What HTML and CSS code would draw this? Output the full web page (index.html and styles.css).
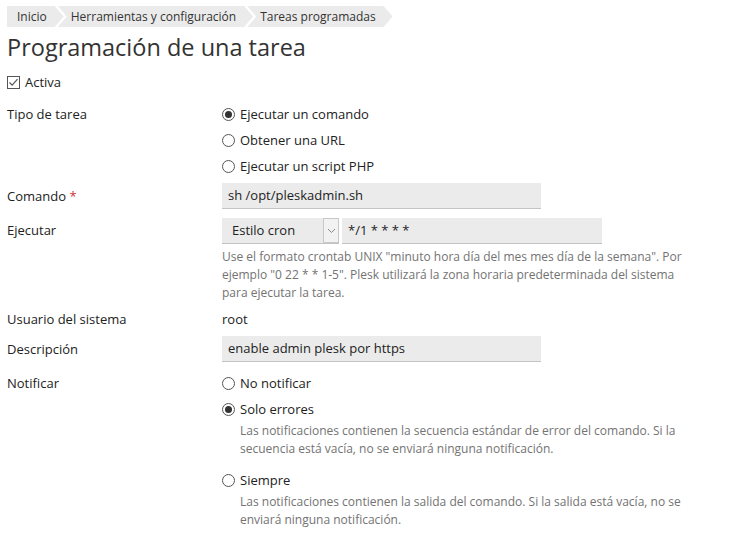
FILE: index.html
```html
<!DOCTYPE html>
<html>
<head>
    <title>Programación de una tarea</title>
    <link rel="stylesheet" href="styles.css">
</head>
<body>
    <div class="breadcrumb">
        <span class="crumb first">Inicio</span>
        <span class="crumb">Herramientas y configuración</span>
        <span class="crumb">Tareas programadas</span>
    </div>

    <h1>Programación de una tarea</h1>

    <div class="check-row">
        <svg class="checkbox" width="13" height="13" viewBox="0 0 13 13">
            <rect x="0.5" y="0.5" width="12" height="12" fill="#fff" stroke="#555"/>
            <path d="M2.5 6.5 L5.2 9.2 L10.5 3.2" fill="none" stroke="#555" stroke-width="1.2"/>
        </svg>
        <span>Activa</span>
    </div>

    <div class="row row-type">
        <div class="label">Tipo de tarea</div>
        <div class="field">
            <div class="radio"><svg width="13" height="13" viewBox="0 0 13 13"><circle cx="6.5" cy="6.5" r="6" fill="#fff" stroke="#555"/><circle cx="6.5" cy="6.5" r="3.5" fill="#333"/></svg>Ejecutar un comando</div>
            <div class="radio"><svg width="13" height="13" viewBox="0 0 13 13"><circle cx="6.5" cy="6.5" r="6" fill="#fff" stroke="#555"/></svg>Obtener una URL</div>
            <div class="radio"><svg width="13" height="13" viewBox="0 0 13 13"><circle cx="6.5" cy="6.5" r="6" fill="#fff" stroke="#555"/></svg>Ejecutar un script PHP</div>
        </div>
    </div>

    <div class="row row-command">
        <div class="label">Comando <span class="required">*</span></div>
        <div class="field"><div class="input wide">sh /opt/pleskadmin.sh</div></div>
    </div>

    <div class="row row-run">
        <div class="label">Ejecutar</div>
        <div class="field">
            <div class="run-inputs">
                <div class="select">
                    <span class="select-text">Estilo cron</span>
                    <span class="select-arrow">
                        <svg width="9" height="6" viewBox="0 0 9 6"><path d="M1 1 L4.5 4.5 L8 1" fill="none" stroke="#888" stroke-width="1"/></svg>
                    </span>
                </div>
                <div class="input cron">*/1 * * * *</div>
            </div>
            <p class="hint">Use el formato crontab UNIX "minuto hora día del mes mes día de la semana". Por<br>ejemplo "0 22 * * 1-5". Plesk utilizará la zona horaria predeterminada del sistema<br>para ejecutar la tarea.</p>
        </div>
    </div>

    <div class="row row-user">
        <div class="label">Usuario del sistema</div>
        <div class="field">root</div>
    </div>

    <div class="row row-desc">
        <div class="label">Descripción</div>
        <div class="field"><div class="input wide">enable admin plesk por https</div></div>
    </div>

    <div class="row row-notify">
        <div class="label">Notificar</div>
        <div class="field">
            <div class="radio"><svg width="13" height="13" viewBox="0 0 13 13"><circle cx="6.5" cy="6.5" r="6" fill="#fff" stroke="#555"/></svg>No notificar</div>
            <div class="radio"><svg width="13" height="13" viewBox="0 0 13 13"><circle cx="6.5" cy="6.5" r="6" fill="#fff" stroke="#555"/><circle cx="6.5" cy="6.5" r="3.5" fill="#333"/></svg>Solo errores</div>
            <p class="hint indent">Las notificaciones contienen la secuencia estándar de error del comando. Si la<br>secuencia está vacía, no se enviará ninguna notificación.</p>
            <div class="radio spaced"><svg width="13" height="13" viewBox="0 0 13 13"><circle cx="6.5" cy="6.5" r="6" fill="#fff" stroke="#555"/></svg>Siempre</div>
            <p class="hint indent">Las notificaciones contienen la salida del comando. Si la salida está vacía, no se<br>enviará ninguna notificación.</p>
        </div>
    </div>
</body>
</html>
```

FILE: styles.css
```css
body { font-family: "Open Sans", "DejaVu Sans", sans-serif; font-size: 13px; color: #222; margin: 0; padding: 0 7px; background: #fff; }

.breadcrumb { display: flex; margin-top: 6px; height: 21px; }
.crumb { display: block; height: 21px; line-height: 21px; font-size: 12px; color: #333; background: #ebebeb; padding: 0 17px 0 13px; margin-left: -6px;
    clip-path: polygon(0 0, calc(100% - 9px) 0, 100% 50%, calc(100% - 9px) 100%, 0 100%, 9px 50%); }
.crumb.first { margin-left: 0; padding-left: 10px;
    clip-path: polygon(0 0, calc(100% - 9px) 0, 100% 50%, calc(100% - 9px) 100%, 0 100%); }

h1 { font-size: 23.5px; font-weight: normal; line-height: 30px; color: #333; margin: 5px 0 10px; }

.check-row { display: flex; align-items: center; height: 20px; }
.checkbox { margin-right: 5px; }

.row { display: flex; }
.label { width: 215px; flex-shrink: 0; line-height: 26px; }
.field { flex: 1; }
.required { color: #d32f2f; }

.row-type { margin-top: 9px; }
.row-command { margin-top: 4px; }
.row-run { margin-top: 9px; }
.row-run .label { line-height: 25px; }
.row-user { margin-top: 4px; }
.row-user .field { line-height: 26px; }
.row-desc { margin-top: 4px; }
.row-notify { margin-top: 8px; }

.radio { display: flex; align-items: center; height: 26px; }
.radio svg { margin-right: 5px; }
.radio.spaced { margin-top: 9px; }

.input { background: #ebebeb; border-bottom: 1px solid #c4c4c4; height: 25px; line-height: 25px; padding: 0 6px; box-sizing: content-box; }
.input.wide { width: 307px; }

.run-inputs { display: flex; height: 25px; }
.select { display: flex; width: 117px; background: #ebebeb; border-bottom: 1px solid #c4c4c4; height: 25px; }
.select-text { flex: 1; line-height: 25px; padding-left: 10px; }
.select-arrow { width: 16px; border: 1px solid #c8c8c8; background: #f2f2f2; display: flex; align-items: center; justify-content: center; box-sizing: border-box; height: 25px; }
.input.cron { margin-left: 3px; width: 248px; }

.hint { font-size: 12px; line-height: 18px; color: #737373; margin: 5px 0 0; white-space: nowrap; }
.hint.indent { margin: 0; padding-left: 18px; }
```
